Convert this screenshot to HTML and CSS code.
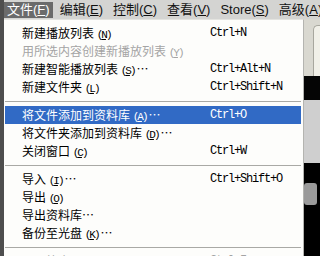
FILE: index.html
```html
<!DOCTYPE html>
<html lang="zh-CN">
<head>
<meta charset="utf-8">
<title>文件菜单</title>
<link rel="stylesheet" href="styles.css">
</head>
<body>
<div class="frame"></div>
<div class="win">
  <nav class="menubar">
    <span class="mi active">文件(<u>F</u>)</span>
    <span class="mi">编辑(<u>E</u>)</span>
    <span class="mi">控制(<u>C</u>)</span>
    <span class="mi">查看(<u>V</u>)</span>
    <span class="mi">Store(<u>S</u>)</span>
    <span class="mi">高级(<u>A</u>)</span>
  </nav>
  <div class="content">
    <ul class="menu">
      <li class="row"><span class="label">新建播放列表 <span class="k">(<u>N</u>)</span></span><span class="sc">Ctrl+N</span></li>
      <li class="row disabled"><span class="label">用所选内容创建新播放列表 <span class="k">(<u>Y</u>)</span></span><span class="sc"></span></li>
      <li class="row"><span class="label">新建智能播放列表 <span class="k">(<u>S</u>)</span>…</span><span class="sc">Ctrl+Alt+N</span></li>
      <li class="row"><span class="label">新建文件夹 <span class="k">(<u>L</u>)</span></span><span class="sc">Ctrl+Shift+N</span></li>
      <li class="sep"></li>
      <li class="row selected"><span class="label">将文件添加到资料库 <span class="k">(<u>A</u>)</span>…</span><span class="sc">Ctrl+O</span></li>
      <li class="row"><span class="label">将文件夹添加到资料库 <span class="k">(<u>D</u>)</span>…</span><span class="sc"></span></li>
      <li class="row"><span class="label">关闭窗口 <span class="k">(<u>C</u>)</span></span><span class="sc">Ctrl+W</span></li>
      <li class="sep"></li>
      <li class="row"><span class="label">导入 <span class="k">(<u>I</u>)</span>…</span><span class="sc">Ctrl+Shift+O</span></li>
      <li class="row"><span class="label">导出 <span class="k">(<u>O</u>)</span></span><span class="sc"></span></li>
      <li class="row"><span class="label">导出资料库…</span><span class="sc"></span></li>
      <li class="row"><span class="label">备份至光盘 <span class="k">(<u>K</u>)</span>…</span><span class="sc"></span></li>
      <li class="sep"></li>
      <li class="row disabled"><span class="label">显示简介 <span class="k">(<u>I</u>)</span></span><span class="sc">Ctrl+I</span></li>
    </ul>
    <div class="app">
      <div class="pane-top"><div class="pane-box"></div></div>
      <div class="pane-black"></div>
      <div class="pane-gray"></div>
      <div class="pane-dark"><div class="blob"></div></div>
    </div>
  </div>
</div>
</body>
</html>
```
FILE: styles.css
```css
html, body {
  margin: 0;
  padding: 0;
}
body {
  width: 320px;
  height: 256px;
  overflow: hidden;
  display: flex;
  background: #000;
  font-family: "Noto Sans CJK SC", "Liberation Sans", sans-serif;
}
.frame {
  width: 4px;
  flex: none;
  background: #4e4e4e;
}
.win {
  flex: 1;
  display: flex;
  flex-direction: column;
  min-width: 0;
}
.menubar {
  height: 19px;
  flex: none;
  display: flex;
  align-items: center;
  gap: 4px;
  background: #d4d4d2;
  font-family: "Liberation Sans", "Noto Sans CJK SC", sans-serif;
  font-size: 13px;
  color: #111;
  white-space: nowrap;
  overflow: hidden;
}
.mi {
  padding: 0 3px;
  height: 16px;
  line-height: 16px;
}
.mi.active {
  background: #6b6b6b;
  color: #fff;
}
.content {
  flex: 1;
  display: flex;
  min-height: 0;
}
.menu {
  list-style: none;
  margin: 0;
  padding: 4px 2px 0 1px;
  width: 296px;
  flex: none;
  background: #fdfdfb;
  border-top: 1px solid #e4e4e0;
  border-right: 1px solid #b4b4b0;
  color: #000;
  font-size: 12px;
}
.row {
  display: grid;
  grid-template-columns: 205px auto;
  height: 18px;
  line-height: 18px;
  white-space: nowrap;
}
.label {
  padding-left: 17px;
}
.k {
  font-family: "Liberation Mono", monospace;
  font-size: 11px;
  letter-spacing: -2px;
  margin-right: 2px;
}
.sc {
  font-family: "Liberation Mono", monospace;
  font-size: 12px;
  letter-spacing: -1.2px;
}
.disabled {
  color: #a4a4a4;
}
.selected {
  background: #316ac5;
  color: #fff;
}
.sep {
  height: 10px;
  display: flex;
  align-items: center;
}
.sep::before {
  content: "";
  flex: 1;
  height: 1px;
  background: #a9a9a5;
}
.app {
  flex: 1;
  display: flex;
  flex-direction: column;
}
.pane-top {
  height: 57px;
  background: #d9d8d0;
  padding: 6px 0 0 9px;
  box-sizing: border-box;
}
.pane-box {
  height: 100%;
  background: #f1f0e8;
  border-top-left-radius: 5px;
  border: 1px solid #a8a79e;
  border-right: none;
  border-bottom: none;
}
.pane-black {
  height: 24px;
  background: #050505;
}
.pane-gray {
  height: 63px;
  background: #cfcfcf;
}
.pane-dark {
  flex: 1;
  background: #000;
  padding-top: 20px;
}
.blob {
  width: 13px;
  height: 22px;
  background: #9a9a9a;
  border-radius: 3px;
}
```
